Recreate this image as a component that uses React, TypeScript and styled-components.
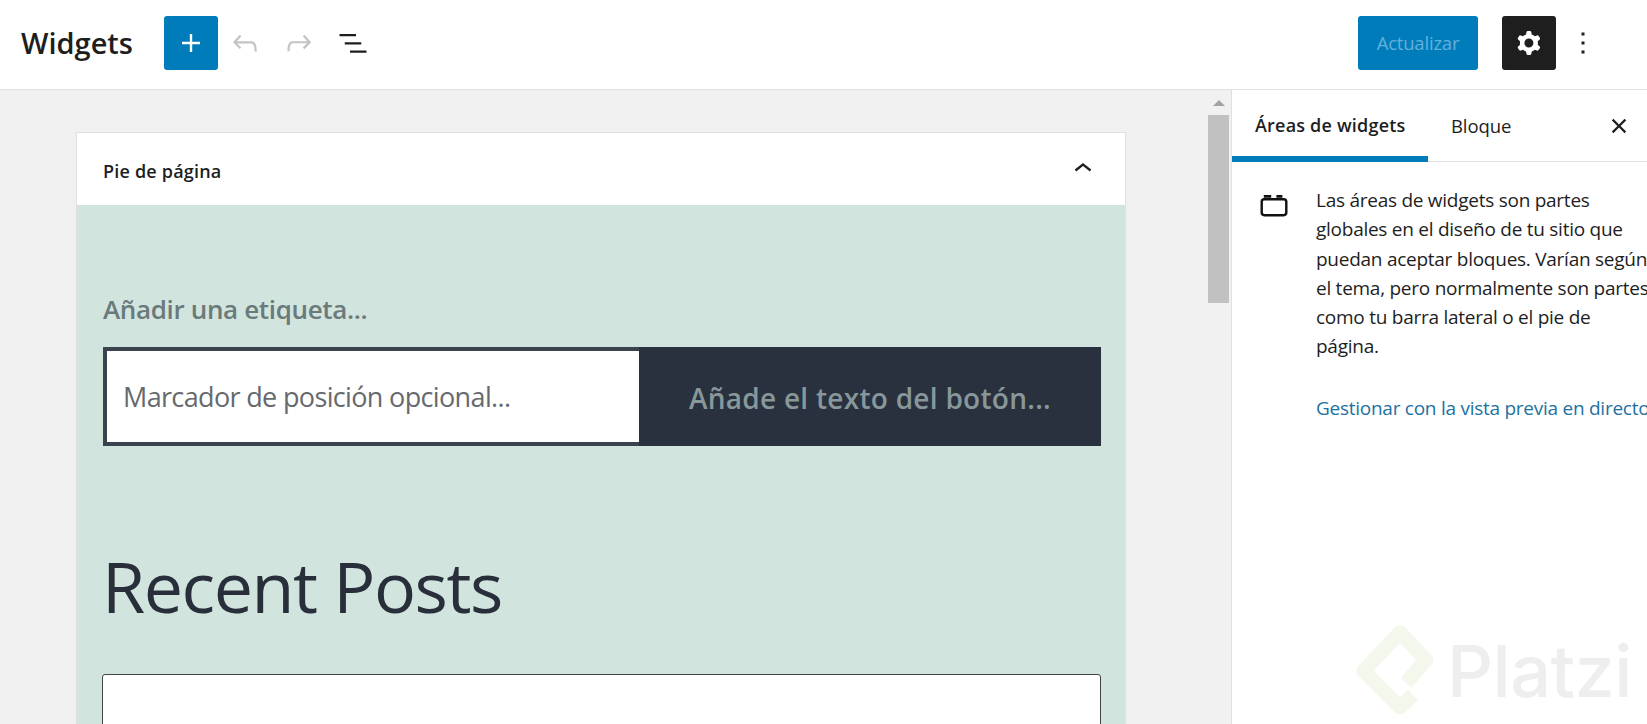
import React from 'react';
import styled, { createGlobalStyle } from 'styled-components';

const GlobalStyle = createGlobalStyle`
  html, body {
    margin: 0;
    padding: 0;
    background: #fff;
  }
  * {
    box-sizing: border-box;
  }
`;

const Page = styled.div`
  position: relative;
  width: 1647px;
  height: 724px;
  overflow: hidden;
  font-family: "Open Sans", "Noto Sans", sans-serif;
  color: #1e1e1e;
`;

const Header = styled.header`
  display: flex;
  align-items: center;
  height: 90px;
  padding: 0 37px 4px 21px;
  background: #fff;
  border-bottom: 1px solid #e0e0e0;
`;

const Title = styled.h1`
  width: 143px;
  margin: 0;
  font-size: 29px;
  font-weight: 600;
  letter-spacing: 0;
  color: #1e1e1e;
`;

const IconButton = styled.button<{ $bg?: string; $fg?: string }>`
  display: flex;
  align-items: center;
  justify-content: center;
  width: 54px;
  height: 54px;
  padding: 0;
  border: 0;
  border-radius: 3px;
  background: ${(p) => p.$bg ?? 'transparent'};
  color: ${(p) => p.$fg ?? '#1e1e1e'};
`;

const Spacer = styled.div`
  flex: 1;
`;

const SaveButton = styled.button`
  width: 120px;
  height: 54px;
  margin-right: 24px;
  padding: 0;
  border: 0;
  border-radius: 3px;
  background: #007cba;
  color: #62b0dc;
  font-family: inherit;
  font-size: 18.5px;
  letter-spacing: -0.2px;
`;

const Body = styled.div`
  display: flex;
  height: 634px;
`;

const Canvas = styled.main`
  width: 1207px;
  padding: 42px 0 0 76px;
  background: #f0f0f0;
  overflow: hidden;
`;

const Card = styled.section`
  width: 1050px;
  border: 1px solid #e0e0e0;
  border-bottom: 0;
`;

const CardHeader = styled.div`
  display: flex;
  align-items: center;
  justify-content: space-between;
  height: 72px;
  padding: 0 24px 0 26px;
  background: #fff;
`;

const CardTitle = styled.span`
  margin-top: 3px;
  font-size: 18px;
  font-weight: 600;
  letter-spacing: 0.2px;
  color: #1e1e1e;
`;

const CardBody = styled.div`
  height: 600px;
  padding: 86px 24px 0 26px;
  background: #d2e4de;
`;

const SearchLabel = styled.div`
  height: 56px;
  font-size: 26px;
  line-height: 36px;
  font-weight: 600;
  letter-spacing: -0.35px;
  color: #6a7a7a;
`;

const SearchRow = styled.div`
  display: flex;
  width: 998px;
  height: 99px;
  background: #29313e;
`;

const SearchInput = styled.div`
  display: flex;
  align-items: center;
  width: 536px;
  padding-left: 16px;
  border: 4px solid #3a424e;
  border-right: 0;
  background: #fff;
  font-size: 27px;
  letter-spacing: -0.65px;
  color: #66696d;
`;

const SearchButton = styled.div`
  display: flex;
  flex: 1;
  align-items: center;
  justify-content: center;
  padding-top: 2px;
  font-size: 28px;
  font-weight: 600;
  letter-spacing: 0.27px;
  color: #87979a;
`;

const Heading = styled.h2`
  margin: 91px 0 0 -1px;
  font-size: 70px;
  line-height: 98px;
  font-weight: 400;
  letter-spacing: -1.45px;
  color: #282f3b;
`;

const PostsBox = styled.div`
  width: 999px;
  height: 120px;
  margin: 39px 0 0 -1px;
  background: #fff;
  border: 1.5px solid #444;
  border-radius: 3px;
`;

const Scrollbar = styled.div`
  display: flex;
  flex-direction: column;
  align-items: center;
  width: 24px;
  padding-right: 1px;
  background: #f1f1f1;
`;

const ScrollArrow = styled.div`
  width: 0;
  height: 0;
  margin-top: 10px;
  border-left: 6px solid transparent;
  border-right: 6px solid transparent;
  border-bottom: 6px solid #a3a3a3;
`;

const ScrollThumb = styled.div`
  width: 21px;
  height: 188px;
  margin-top: 9px;
  background: #c1c1c1;
`;

const Sidebar = styled.aside`
  width: 416px;
  background: #fff;
  border-left: 1px solid #e0e0e0;
  overflow: hidden;
`;

const Tabs = styled.div`
  display: flex;
  align-items: stretch;
  height: 72px;
  border-bottom: 1px solid #e0e0e0;
`;

const Tab = styled.div<{ $active?: boolean; $width: number }>`
  display: flex;
  align-items: center;
  width: ${(p) => p.$width}px;
  height: 72px;
  padding-left: 23px;
  border-bottom: ${(p) => (p.$active ? '6px solid #007cba' : '0')};
  padding-top: ${(p) => (p.$active ? '4px' : '0')};
  padding-bottom: ${(p) => (p.$active ? '0' : '2px')};
  font-size: ${(p) => (p.$active ? '18px' : '18.5px')};
  font-weight: ${(p) => (p.$active ? 600 : 400)};
  letter-spacing: ${(p) => (p.$active ? '0.2px' : '-0.1px')};
  color: #1e1e1e;
`;

const CloseWrap = styled.div`
  display: flex;
  align-items: center;
  margin-left: auto;
  padding-right: 10px;
`;

const Info = styled.div`
  display: flex;
  padding: 24px 0 0 24px;
`;

const InfoIcon = styled.div`
  flex: none;
  width: 60px;
  padding: 9px 0 0 4px;
`;

const InfoText = styled.div`
  font-size: 19px;
  line-height: 29.3px;
  letter-spacing: -0.26px;
  color: #1e1e1e;
`;

const Line = styled.div`
  white-space: nowrap;
`;

const LinkLine = styled.a`
  display: block;
  margin-top: 32px;
  white-space: nowrap;
  color: #2271a1;
`;

const Watermark = styled.div`
  position: absolute;
  right: 15px;
  bottom: 8px;
  display: flex;
  align-items: center;
  gap: 13px;
`;

const WatermarkText = styled.span`
  font-family: "Inter", sans-serif;
  font-size: 72px;
  line-height: 91px;
  font-weight: 500;
  letter-spacing: -0.5px;
  color: #eeeeee;
`;

const PlusIcon = () => (
  <svg width="36" height="36" viewBox="0 0 24 24" fill="currentColor">
    <path d="M18 11.2h-5.2V6h-1.6v5.2H6v1.6h5.2V18h1.6v-5.2H18z" />
  </svg>
);

const UndoIcon = () => (
  <svg width="36" height="36" viewBox="0 0 24 24" fill="currentColor">
    <path d="M18.3 11.7c-.6-.6-1.4-.9-2.3-.9H6.7l2.9-3.3-1.1-1-4.5 5L8.5 16l1-1-2.7-2.7H16c.5 0 .9.2 1.3.5 1 1 1 3.4 1 4.5v.3h1.5v-.2c0-1.5 0-4.3-1.5-5.7z" />
  </svg>
);

const RedoIcon = () => (
  <svg width="36" height="36" viewBox="0 0 24 24" fill="currentColor">
    <path d="M15.6 6.5l-1.1 1 2.9 3.3H8c-.9 0-1.7.3-2.3.9-1.4 1.5-1.4 4.2-1.4 5.6v.2h1.5v-.3c0-1.1 0-3.5 1-4.5.3-.3.7-.5 1.3-.5h9.2L14.5 15l1.1 1.1 4.6-4.6-4.6-5z" />
  </svg>
);

const ListIcon = () => (
  <svg width="36" height="36" viewBox="0 0 24 24" fill="currentColor">
    <path d="M3 6h11v1.5H3V6zm3.5 5.5h11V13h-11v-1.5zM21 17H10v1.5h11V17z" />
  </svg>
);

const CogIcon = () => (
  <svg width="36" height="36" viewBox="0 0 24 24" fill="currentColor">
    <path
      fillRule="evenodd"
      d="M10.289 4.836A1 1 0 0111.275 4h1.306a1 1 0 01.987.836l.244 1.466c.787.26 1.503.679 2.108 1.218l1.393-.522a1 1 0 011.216.437l.653 1.13a1 1 0 01-.23 1.273l-1.148.944a6.025 6.025 0 010 2.435l1.149.946a1 1 0 01.23 1.272l-.653 1.13a1 1 0 01-1.216.437l-1.394-.522c-.605.54-1.32.958-2.108 1.218l-.244 1.466a1 1 0 01-.987.836h-1.306a1 1 0 01-.986-.836l-.244-1.466a5.995 5.995 0 01-2.108-1.218l-1.394.522a1 1 0 01-1.217-.436l-.653-1.131a1 1 0 01.23-1.272l1.149-.946a6.026 6.026 0 010-2.435l-1.148-.944a1 1 0 01-.23-1.272l.653-1.131a1 1 0 011.217-.437l1.393.522a5.994 5.994 0 012.108-1.218l.244-1.466zM14.929 12a3 3 0 11-6 0 3 3 0 016 0z"
    />
  </svg>
);

const MoreIcon = () => (
  <svg width="36" height="36" viewBox="0 0 24 24" fill="currentColor">
    <path d="M13 19h-2v-2h2v2zm0-6h-2v-2h2v2zm0-6h-2V5h2v2z" />
  </svg>
);

const ChevronUpIcon = () => (
  <svg width="36" height="36" viewBox="0 0 24 24" fill="currentColor">
    <path d="M6.5 12.4L12 8l5.5 4.4-.9 1.2L12 10l-4.5 3.6-1-1.2z" />
  </svg>
);

const CloseIcon = () => (
  <svg width="36" height="36" viewBox="0 0 24 24" fill="#1e1e1e">
    <path d="M12 13.06l3.712 3.713 1.061-1.06L13.061 12l3.712-3.712-1.06-1.06L12 10.938 8.288 7.227l-1.061 1.06L10.939 12l-3.712 3.712 1.06 1.061L12 13.061z" />
  </svg>
);

const WidgetAreaIcon = () => (
  <svg width="28" height="22" viewBox="0 0 28 22" fill="none" stroke="#111" strokeWidth="2.4">
    <rect x="1.7" y="4.2" width="24.6" height="16" rx="2.6" />
    <path d="M3.8 1.4h7.4M16.4 1.4h6" strokeWidth="2.8" />
  </svg>
);

const PlatziLogo = () => (
  <svg width="78" height="91" viewBox="0 0 78 91" fill="none" stroke="#f4f8ec" strokeWidth="14.5" strokeLinejoin="round">
    <path d="M50 58L70 35 44 7.5 7.5 46 44 82.5 57 70" />
  </svg>
);

const App = () => {
  return (
    <Page>
      <GlobalStyle />
      <Header>
        <Title>Widgets</Title>
        <IconButton $bg="#007cba" $fg="#fff">
          <PlusIcon />
        </IconButton>
        <IconButton $fg="#c4c4c4">
          <UndoIcon />
        </IconButton>
        <IconButton $fg="#c4c4c4">
          <RedoIcon />
        </IconButton>
        <IconButton>
          <ListIcon />
        </IconButton>
        <Spacer />
        <SaveButton>Actualizar</SaveButton>
        <IconButton $bg="#1e1e1e" $fg="#fff">
          <CogIcon />
        </IconButton>
        <IconButton>
          <MoreIcon />
        </IconButton>
      </Header>
      <Body>
        <Canvas>
          <Card>
            <CardHeader>
              <CardTitle>Pie de página</CardTitle>
              <ChevronUpIcon />
            </CardHeader>
            <CardBody>
              <SearchLabel>Añadir una etiqueta...</SearchLabel>
              <SearchRow>
                <SearchInput>Marcador de posición opcional...</SearchInput>
                <SearchButton>Añade el texto del botón...</SearchButton>
              </SearchRow>
              <Heading>Recent Posts</Heading>
              <PostsBox />
            </CardBody>
          </Card>
        </Canvas>
        <Scrollbar>
          <ScrollArrow />
          <ScrollThumb />
        </Scrollbar>
        <Sidebar>
          <Tabs>
            <Tab $active $width={196}>
              Áreas de widgets
            </Tab>
            <Tab $width={110}>Bloque</Tab>
            <CloseWrap>
              <CloseIcon />
            </CloseWrap>
          </Tabs>
          <Info>
            <InfoIcon>
              <WidgetAreaIcon />
            </InfoIcon>
            <InfoText>
              <Line>Las áreas de widgets son partes</Line>
              <Line>globales en el diseño de tu sitio que</Line>
              <Line>puedan aceptar bloques. Varían según</Line>
              <Line>el tema, pero normalmente son partes</Line>
              <Line>como tu barra lateral o el pie de</Line>
              <Line>página.</Line>
              <LinkLine>Gestionar con la vista previa en directo</LinkLine>
            </InfoText>
          </Info>
        </Sidebar>
      </Body>
      <Watermark>
        <PlatziLogo />
        <WatermarkText>Platzi</WatermarkText>
      </Watermark>
    </Page>
  );
};

export default App;
